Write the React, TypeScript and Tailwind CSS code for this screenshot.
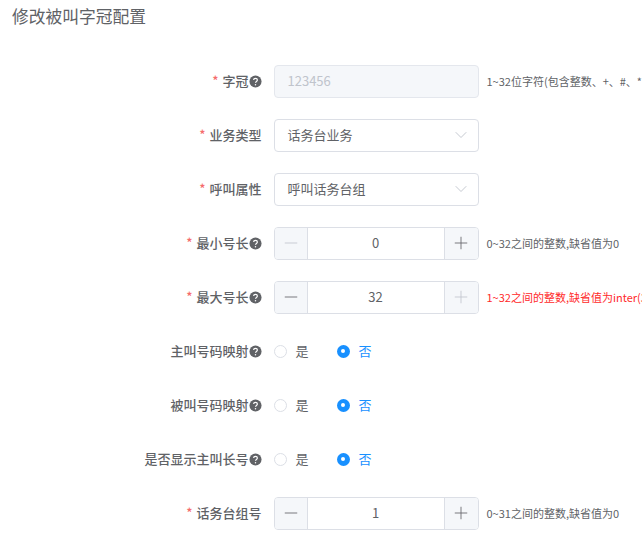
import { Minus, Plus, ChevronDown } from "lucide-react";

const HelpIcon = () => (
  <svg viewBox="0 0 14 14" className="h-[13px] w-[13px] shrink-0">
    <circle cx="7" cy="7" r="6.5" fill="#606266" />
    <path d="M5 5.5c0-1.1.9-1.8 2-1.8s2 .7 2 1.7c0 1.5-2 1.5-2 3" fill="none" stroke="#fff" strokeWidth="1.3" />
    <circle cx="7" cy="10.4" r=".8" fill="#fff" />
  </svg>
);

const Row = ({ label, required, help, children, hint, hintRed }: {
  label: string;
  required?: boolean;
  help?: boolean;
  children: React.ReactNode;
  hint?: string;
  hintRed?: boolean;
}) => (
  <div className="mb-[21px] flex h-[33px] items-center">
    <div className="mr-3 flex w-[261.5px] shrink-0 items-center justify-end text-[13px] font-medium text-[#606266]">
      {required && <span className="mr-1 text-[#f56c6c]">*</span>}
      <span>{label}</span>
      {help && <HelpIcon />}
    </div>
    {children}
    {hint && (
      <span className={`ml-2 whitespace-nowrap text-[11px] ${hintRed ? "text-[#ff2a2a]" : "text-[#606266]"}`}>{hint}</span>
    )}
  </div>
);

const SelectBox = ({ value }: { value: string }) => (
  <div className="flex h-[33px] w-[205px] shrink-0 items-center justify-between rounded border border-[#dcdfe6] bg-white pl-[13px] pr-[7px] text-[13px] text-[#606266]">
    <span>{value}</span>
    <ChevronDown className="h-5 w-5 text-[#c0c4cc]" strokeWidth={1.1} />
  </div>
);

const Stepper = ({ value, minDisabled, maxDisabled }: { value: string; minDisabled?: boolean; maxDisabled?: boolean }) => (
  <div className="flex h-[33px] w-[205px] shrink-0 overflow-hidden rounded border border-[#dcdfe6] bg-white text-[13px] text-[#606266]">
    <div className="flex w-[33px] items-center justify-center border-r border-[#dcdfe6] bg-[#f5f7fa]">
      <Minus className={`h-5 w-5 ${minDisabled ? "text-[#c0c4cc]" : "text-[#606266]"}`} strokeWidth={1} />
    </div>
    <div className="flex flex-1 items-center justify-center">{value}</div>
    <div className="flex w-[34px] items-center justify-center border-l border-[#dcdfe6] bg-[#f5f7fa]">
      <Plus className={`h-5 w-5 ${maxDisabled ? "text-[#c0c4cc]" : "text-[#606266]"}`} strokeWidth={1} />
    </div>
  </div>
);

const YesNo = () => (
  <div className="flex items-center text-[13px]">
    <span className="h-[13px] w-[13px] rounded-full border border-[#dcdfe6] bg-white" />
    <span className="ml-[9px] w-[41px] text-[#606266]">是</span>
    <span className="flex h-[13px] w-[13px] items-center justify-center rounded-full bg-[#1890ff]">
      <span className="h-1 w-1 rounded-full bg-white" />
    </span>
    <span className="ml-[9px] text-[#1890ff]">否</span>
  </div>
);

export default function App() {
  return (
    <div
      className="h-[541px] w-[642px] overflow-hidden bg-white"
      style={{ fontFamily: '"Noto Sans CJK SC", "Liberation Sans", sans-serif' }}
    >
      <h1 className="h-[64.5px] pl-3 pt-[4px] text-[16.75px] leading-6 font-normal text-[#606266]">修改被叫字冠配置</h1>
      <Row label="字冠" required help hint="1~32位字符(包含整数、+、#、*">
        <div className="flex h-[33px] w-[205px] shrink-0 items-center rounded border border-[#e4e7ed] bg-[#f5f7fa] pl-[13px] text-[13px] text-[#c0c4cc]">123456</div>
      </Row>
      <Row label="业务类型" required>
        <SelectBox value="话务台业务" />
      </Row>
      <Row label="呼叫属性" required>
        <SelectBox value="呼叫话务台组" />
      </Row>
      <Row label="最小号长" required help hint="0~32之间的整数,缺省值为0">
        <Stepper value="0" minDisabled />
      </Row>
      <Row label="最大号长" required help hint="1~32之间的整数,缺省值为inter(32)" hintRed>
        <Stepper value="32" maxDisabled />
      </Row>
      <Row label="主叫号码映射" help>
        <YesNo />
      </Row>
      <Row label="被叫号码映射" help>
        <YesNo />
      </Row>
      <Row label="是否显示主叫长号" help>
        <YesNo />
      </Row>
      <Row label="话务台组号" required hint="0~31之间的整数,缺省值为0">
        <Stepper value="1" />
      </Row>
    </div>
  );
}
